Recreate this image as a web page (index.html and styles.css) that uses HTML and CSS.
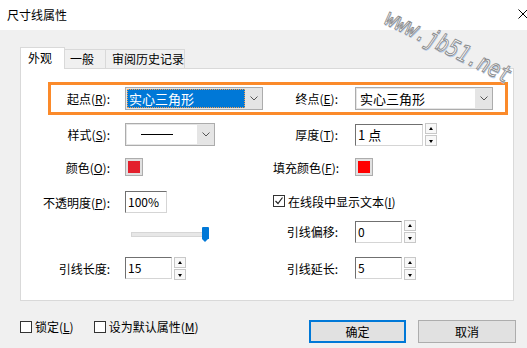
FILE: index.html
```html
<!DOCTYPE html>
<html lang="zh-CN">
  <head>
    <meta charset="UTF-8" />
    <meta name="viewport" content="width=device-width, initial-scale=1.0" />
    <title>尺寸线属性</title>
    <link rel="stylesheet" href="styles.css">
  </head>
  <body>
    <div class="dialog">
      <div class="titlebar">
        <span class="title">尺寸线属性</span>
        <svg class="close" width="10" height="10" viewBox="0 0 10 10">
          <path d="M0.5 0.5 L9.5 9.5 M9.5 0.5 L0.5 9.5" stroke="#000" stroke-width="1" fill="none" />
        </svg>
      </div>
      <div class="watermark">www.jb51.net</div>

      <div class="content">
        <div class="tabs">
          <div class="tab active">外观</div>
          <div class="tab tab-general">一般</div>
          <div class="tab tab-review">审阅历史记录</div>
        </div>

        <div class="panel">
          <div class="row ends">
            <label class="lbl">起点(<u>R</u>):</label>
            <div class="select wide">
              <div class="field selected"><span>实心三角形</span></div>
              <div class="arrow"><svg width="8" height="5" viewBox="0 0 8 5"><path d="M0.5 0.5 L4 4 L7.5 0.5" stroke="#555" fill="none" /></svg></div>
            </div>
            <label class="lbl lbl2">终点(<u>E</u>):</label>
            <div class="select wide">
              <div class="field"><span>实心三角形</span></div>
              <div class="arrow"><svg width="8" height="5" viewBox="0 0 8 5"><path d="M0.5 0.5 L4 4 L7.5 0.5" stroke="#555" fill="none" /></svg></div>
            </div>
          </div>

          <div class="row r-style">
            <label class="lbl">样式(<u>S</u>):</label>
            <div class="select style-select">
              <div class="field"><i class="line-sample"></i></div>
              <div class="arrow"><svg width="8" height="5" viewBox="0 0 8 5"><path d="M0.5 0.5 L4 4 L7.5 0.5" stroke="#555" fill="none" /></svg></div>
            </div>
            <label class="lbl lbl2">厚度(<u>T</u>):</label>
            <div class="spin">
              <div class="input thick">1 点</div>
              <div class="spin-btns"><span class="up"></span><span class="down"></span></div>
            </div>
          </div>

          <div class="row r-color">
            <label class="lbl">颜色(<u>O</u>):</label>
            <div class="swatch"><i class="crimson"></i></div>
            <label class="lbl lbl2">填充颜色(<u>F</u>):</label>
            <div class="swatch"><i class="red"></i></div>
          </div>

          <div class="row r-opacity">
            <label class="lbl">不透明度(<u>P</u>):</label>
            <div class="input opacity">100%</div>
            <div class="check-wrap">
              <span class="checkbox checked"><svg width="10" height="10" viewBox="0 0 10 10"><path d="M1.5 5 L4 7.5 L8.5 1.5" stroke="#222" stroke-width="1.2" fill="none" /></svg></span>
              <span>在线段中显示文本(<u>I</u>)</span>
            </div>
          </div>

          <div class="row r-slider">
            <span></span>
            <div class="slider"><div class="track"></div><div class="thumb"></div></div>
            <label class="lbl lbl2">引线偏移:</label>
            <div class="spin">
              <div class="input short">0</div>
              <div class="spin-btns"><span class="up"></span><span class="down"></span></div>
            </div>
          </div>

          <div class="row r-leader">
            <label class="lbl">引线长度:</label>
            <div class="spin">
              <div class="input short">15</div>
              <div class="spin-btns"><span class="up"></span><span class="down"></span></div>
            </div>
            <label class="lbl lbl2">引线延长:</label>
            <div class="spin">
              <div class="input short">5</div>
              <div class="spin-btns"><span class="up"></span><span class="down"></span></div>
            </div>
          </div>
        </div>

        <div class="footer">
          <div class="opt"><span class="checkbox"></span><span>锁定(<u>L</u>)</span></div>
          <div class="opt opt-default"><span class="checkbox"></span><span>设为默认属性(<u>M</u>)</span></div>
          <button class="btn primary">确定</button>
          <button class="btn">取消</button>
        </div>
      </div>
    </div>
  </body>
</html>
```
FILE: styles.css
```css
body {
  margin: 0;
  font-family: "Noto Sans CJK SC", "Noto Sans", sans-serif;
  font-size: 12px;
  color: #000;
  background: #f0f0f0;
}

u {
  text-decoration: underline;
  text-underline-offset: 1px;
}

.dialog {
  position: relative;
  width: 527px;
  height: 348px;
  overflow: hidden;
  background: #f0f0f0;
}

.titlebar {
  height: 30px;
  background: #fff;
  display: flex;
  align-items: center;
  justify-content: space-between;
  padding: 0 0 0 7px;
}

.title {
  line-height: 14px;
  margin-top: -1px;
}

.close {
  margin-right: -1px;
  margin-top: -2px;
}

.watermark {
  position: absolute;
  left: 393px;
  top: 3px;
  transform: rotate(26deg) scaleY(1.25);
  transform-origin: left top;
  font-family: "DejaVu Sans Mono", monospace;
  font-style: italic;
  font-size: 19px;
  letter-spacing: 0;
  color: #fff;
  -webkit-text-stroke: 0.8px #8c8c8c;
  text-shadow: 1px 1px 0 #b4cbe8;
  z-index: 5;
}

.content {
  padding-top: 17px;
}

/* tabs */
.tabs {
  display: flex;
  align-items: flex-end;
  height: 21px;
  margin-left: 20px;
}

.tab {
  box-sizing: border-box;
  height: 19px;
  line-height: 17px;
  padding-left: 6px;
  border: 1px solid #d9d9d9;
  border-bottom: none;
  background: #f0f0f0;
}

.tab.active {
  width: 45px;
  height: 22px;
  line-height: 20px;
  padding-left: 7px;
  margin-bottom: -1px;
  background: #fff;
  position: relative;
  z-index: 1;
}

.tab-general {
  width: 41px;
  border-left: none;
  padding-left: 5px;
}

.tab-review {
  width: 79px;
  border-left: none;
}

.panel {
  box-sizing: border-box;
  width: 494px;
  height: 233px;
  margin-left: 20px;
  border: 1px solid #d9d9d9;
  background: #fff;
  padding-top: 13px;
}

/* rows */
.row {
  display: grid;
  grid-template-columns: 104px 148px 82px 1fr;
  align-items: center;
}

.lbl {
  text-align: right;
  padding-right: 15px;
  white-space: nowrap;
}

.lbl2 {
  padding-right: 17px;
}

.ends {
  grid-template-columns: 74px 148px 82px 1fr;
  width: 460px;
  height: 33px;
  box-sizing: border-box;
  margin-left: 27px;
  border: 3px solid #fb8a2a;
}

.r-style { height: 23px; margin-top: 8px; }
.r-color { height: 22px; margin-top: 10px; }
.r-opacity { height: 22px; margin-top: 13px; }
.r-slider { height: 23px; margin-top: 7px; }
.r-leader { height: 24px; margin-top: 13px; }

/* select boxes */
.select {
  box-sizing: border-box;
  display: flex;
  height: 23px;
  border: 1px solid #acacac;
  background: #e5e5e5;
  padding: 1px 0 1px 1px;
}

.select.wide {
  width: 138px;
}

.style-select {
  width: 90px;
}

.field {
  flex: 1;
  background: #fff;
  display: flex;
  align-items: center;
  padding-left: 3px;
  font-size: 13px;
}

.field.selected {
  background: #fff;
  padding: 0;
}

.field.selected span {
  flex: 1;
  height: 100%;
  box-sizing: border-box;
  background: #0078d7;
  color: #fff;
  outline: 1px dotted #f5a050;
  outline-offset: -1px;
  padding-left: 2px;
  line-height: 19px;
}

.arrow {
  width: 17px;
  display: flex;
  align-items: center;
  justify-content: center;
}

.line-sample {
  display: block;
  width: 32px;
  height: 1px;
  background: #000;
  margin-left: 11px;
}

/* inputs */
.input {
  box-sizing: border-box;
  height: 22px;
  border: 1px solid;
  border-color: #707070 #d5d5d5 #d5d5d5 #707070;
  background: #fff;
  padding-left: 2px;
  line-height: 19px;
  font-size: 12px;
}

.input.thick {
  width: 68px;
  font-size: 13px;
}

.input.short {
  width: 47px;
}

.input.opacity {
  width: 42px;
}

.spin {
  display: flex;
  align-items: center;
  gap: 2px;
}

.spin-btns {
  display: flex;
  flex-direction: column;
  gap: 1px;
}

.spin-btns span {
  box-sizing: border-box;
  width: 12px;
  height: 11px;
  border: 1px solid #c8c8c8;
  background: #f8f8f8;
  position: relative;
}

.spin-btns span::after {
  content: "";
  position: absolute;
  left: 3px;
  border-left: 2.5px solid transparent;
  border-right: 2.5px solid transparent;
}

.spin-btns .up::after {
  top: 3px;
  border-bottom: 3px solid #000;
}

.spin-btns .down::after {
  top: 4px;
  border-top: 3px solid #000;
}

/* colour swatches */
.swatch {
  box-sizing: border-box;
  width: 18px;
  height: 18px;
  border: 1px solid #adadad;
  background: #e1e1e1;
  padding: 2px;
}

.swatch i {
  display: block;
  width: 12px;
  height: 12px;
}

.swatch .crimson { background: #e3202d; }
.swatch .red { background: #ff0000; }

/* checkboxes */
.check-wrap {
  grid-column: 3 / 5;
  display: flex;
  align-items: center;
  gap: 3px;
  margin-top: -2px;
}

.checkbox {
  box-sizing: border-box;
  width: 12px;
  height: 12px;
  border: 1px solid #333;
  background: #fff;
  display: flex;
  align-items: center;
  justify-content: center;
}

/* slider */
.slider {
  position: relative;
  height: 16px;
  align-self: end;
}

.track {
  position: absolute;
  left: 6px;
  top: 5px;
  width: 76px;
  height: 3px;
  background: #e7e7e7;
  border: 1px solid #d6d6d6;
}

.thumb {
  position: absolute;
  left: 77px;
  top: 0;
  width: 7px;
  height: 12px;
  background: #0078d7;
  border-radius: 1px 1px 0 0;
}

.thumb::after {
  content: "";
  position: absolute;
  left: 0;
  top: 12px;
  border-left: 3.5px solid transparent;
  border-right: 3.5px solid transparent;
  border-top: 3px solid #0078d7;
}

/* footer */
.footer {
  display: flex;
  align-items: flex-start;
  margin-top: 19px;
  padding-left: 20px;
}

.opt {
  display: flex;
  align-items: center;
  gap: 3px;
  height: 12px;
  line-height: 12px;
  margin-top: 1px;
}

.opt-default {
  margin-left: 20px;
}

.btn {
  box-sizing: border-box;
  width: 98px;
  height: 23px;
  border: 1px solid #adadad;
  background: #e1e1e1;
  font-family: inherit;
  font-size: 12px;
  padding: 0;
  margin-left: 12px;
}

.btn.primary {
  width: 97px;
  border: 2px solid #0078d7;
  margin-left: auto;
}

.footer .btn:last-child {
  margin-right: 11px;
}
```
